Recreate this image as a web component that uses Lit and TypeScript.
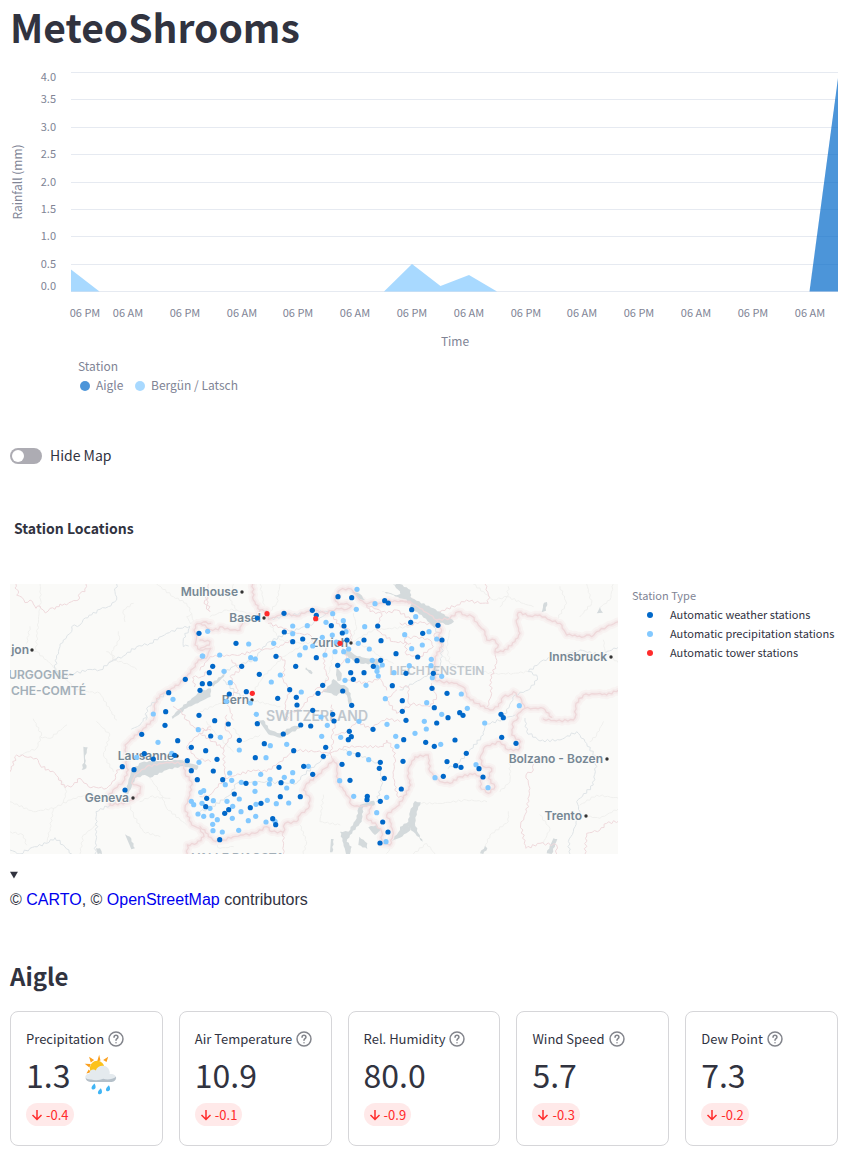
import { LitElement, html, svg, css } from "lit";
import { customElement, property, state } from "lit/decorators.js";

type Kind = "weather" | "precipitation" | "tower";

interface Tile {
  x: number;
  y: number;
  frontier: string[];
  region: string[];
  water: string[];
  river: string[];
  road: string[];
  dots: Record<Kind, string>;
}

/* The map is drawn in six sheets. Each sheet uses three units per map unit. */
const TILES: Tile[] = [
  {
    x: -10,
    y: -4,
    frontier: [
      "632,205 600,210 585,195 590,170 582,150 592,130 610,126 632,130",
      "632,205 618,235 595,240 580,265 560,290 540,310 515,325 480,345 465,370 460,420",
    ],
    region: [
      "48,12 45,24 55,32 50,45 66,52 75,68 90,60 100,72 108,85 120,78 130,90 136,99 150,85 165,88 180,72 200,75 215,65 235,60 240,40 255,35 258,12",
      "630,40 612,70 628,92",
      "630,268 605,290 578,292 584,320",
      "520,380 545,395 560,420",
    ],
    water: ["515,410 540,385 600,335 632,325 632,350 600,365 560,385 530,408 518,417"],
    river: [
      "350,12 345,35 350,60 325,80 300,88 275,105 250,118 240,135 215,140 215,155 190,180 180,200 170,235 165,265 180,290 225,280 270,268 300,270 340,240 370,228 410,200 450,190 500,160 540,145 570,138 565,150 550,175 550,200 565,198",
      "500,340 470,360 440,385 438,420",
    ],
    road: [
      "120,12 122,60 116,110 112,160 108,210",
      "30,215 65,205 110,215 150,250 200,300 230,330",
      "355,155 358,180 335,215 340,240 380,250 410,268",
      "470,12 520,50 560,70 575,100 580,130",
      "375,125 370,90 400,70",
      "80,190 90,140",
      "575,100 560,110 572,132 590,118",
      "320,215 345,230 325,250 350,235",
      "230,330 300,340 330,390 350,420",
    ],
    dots: {
      weather: "597,160 556,298 607,311 600,331 506,338 497,395 597,406",
      precipitation: "607,228 519,358 460,402",
      tower: "",
    },
  },
  {
    x: 190,
    y: -4,
    frontier: [
      "0,130 15,135 30,148 55,150 60,140 90,150 120,150 125,135 150,110 170,112 180,90 200,92 205,118 225,112 250,100 290,108 320,95 345,90 375,100 395,92 410,85 440,88 455,78 440,70 415,75 405,55 420,30 445,25 460,35 480,60 500,72 520,65 530,75 560,62 600,65 632,64",
      "0,205 28,195 30,185 0,180",
      "180,90 160,60 158,12",
    ],
    region: [
      "25,12 20,60 30,95",
      "0,270 30,230 80,225 120,225 170,210 220,205 250,195 270,180",
      "235,230 255,240 250,300 270,330 255,370 262,420",
      "205,130 250,145 290,160 330,165 340,185 380,190",
      "500,75 510,95 545,100 530,150 580,185 632,190",
      "400,110 420,140 450,150 455,180 430,200 440,235 420,255",
      "262,400 300,390 330,350 380,330",
      "380,190 370,250 385,300 345,330",
      "590,330 560,360 590,400 632,375",
      "95,240 120,270 90,290 115,330 80,360 100,420",
      "395,375 400,420",
      "440,300 500,310 540,295 560,330",
      "500,75 560,100 590,90 632,118",
    ],
    water: [
      "438,205 465,225 500,235 545,238 542,250 490,252 460,242 435,225",
      "410,262 425,280 424,300 412,302 408,285",
      "366,335 390,315 400,297 415,310 440,320 452,340 456,375 446,372 440,345 424,337 410,348 385,338",
      "318,262 338,278 335,283 316,268",
      "30,313 75,280 72,290 40,320",
      "0,330 25,330 20,350 0,362",
      "545,35 580,45 600,55 632,60 632,30 600,12 578,12 604,40 590,46 560,36",
      "455,35 480,42 495,60 480,57",
      "520,240 545,262 530,275",
    ],
    river: ["205,118 260,108 330,96 400,95", "70,280 100,260 160,240 200,190 260,160 340,130 380,100", "150,360 110,340 70,300"],
    road: [
      "180,12 190,60 195,110 240,180 300,190 380,185 450,190 520,150 632,140",
      "150,350 190,290 250,230 300,200",
      "400,220 390,270 370,320",
      "0,395 60,370 150,360 240,380",
      "450,190 470,140 460,100",
      "100,12 90,60 110,90 180,110",
      "240,12 230,70 205,100",
      "580,250 540,230 500,200 450,190",
      "30,110 80,90 110,90",
    ],
    dots: {
      weather:
        "414,50 455,53 554,62 565,69 252,100 337,91 349,106 172,114 394,137 432,138 533,138 253,156 427,159 108,190 278,185 308,177 441,180 492,180 543,182 228,229 349,233 471,242 542,241 588,221 38,259 28,278 125,259 287,259 413,256 520,259 452,278 492,278 178,283 460,298 29,311 368,316 577,317 269,329 139,335 88,342 354,340 428,333 289,352 233,355 607,362 291,375 455,376 338,391 607,394 398,403",
      precipitation:
        "471,28 525,71 469,88 398,101 278,138 322,137 378,127 430,122 494,140 278,161 23,154 438,155 397,165 367,172 614,164 146,192 221,190 409,186 475,190 338,198 316,203 446,207 405,215 431,215 508,207 8,228 59,225 299,225 375,225 152,233 166,237 443,242 517,241 547,255 72,274 530,262 531,274 535,288 582,278 241,285 214,306 435,301 91,308 498,316 304,336 556,356 79,364 151,369 169,403 363,411",
      tower: "201,101 347,116 420,190 157,340",
    },
  },
  {
    x: 390,
    y: -4,
    frontier: [
      "0,62 35,68 60,85 90,105 110,120 150,115 175,95 195,105 215,108 235,135 255,155 260,180 285,180 295,195 285,215 310,215 345,185 360,160 350,130 355,97 390,108 420,105 450,120 480,130 500,165 525,165 545,172 560,165 575,170 590,155 620,140 656,125",
      "110,120 125,150 115,170 125,200 105,230 105,300 125,305 170,310 195,325 200,350 230,370 270,390 295,380 310,350 330,345 340,335 365,360 375,385 355,400 350,420",
      "375,385 400,385 430,385 455,412",
      "525,412 528,370 550,345 600,340 620,345 656,330",
    ],
    region: [
      "285,215 290,250 270,300 275,340 262,380",
      "120,95 170,75 200,60 240,70 265,70 265,45 255,12",
      "0,130 30,135 60,125 95,135",
      "15,175 50,170 90,180 100,200 60,230 20,225 15,175",
      "0,320 25,320 25,370 90,380 110,350 95,310",
      "105,160 122,158 118,175 104,172 105,160",
    ],
    water: [
      "0,20 15,30 30,50 50,62 100,85 125,100 150,115 162,125 145,135 120,128 105,142 95,135 65,105 30,85 35,72 10,50 0,40",
      "425,97 432,68 441,66 438,92",
      "590,100 600,82 609,98",
    ],
    river: ["310,412 345,345 385,330 412,300 410,285 385,275 430,240 500,222 540,210 600,225 656,200", "100,140 130,180 120,260 60,300 0,330"],
    road: [
      "220,12 280,60 322,50 370,70 400,80",
      "325,20 322,50 300,80",
      "480,20 500,70 470,120",
      "560,12 575,70 540,110",
      "150,250 280,282 340,280 385,275",
      "640,12 630,60 600,82",
      "130,230 150,250 140,200 150,150",
      "500,222 515,212 530,222",
      "610,180 615,215 656,250",
    ],
    dots: {
      weather: "35,89 32,127 114,136 68,160 126,180 53,231 18,280 100,280 96,325 141,340 103,383 179,398 189,406 144,413 303,403 310,413",
      precipitation: "47,110 87,155 110,177 67,195 35,206 94,238 93,257 28,257 97,293 125,289 184,342 80,368 202,385 125,403 358,377",
      tower: "",
    },
  },
  {
    x: -10,
    y: 131,
    frontier: [
      "460,15 430,40 375,90 380,150 385,165 370,200 345,220 325,245 330,270 385,262 420,235 422,215 395,205 405,180 440,155 500,142 550,145 555,175 575,200 570,240 555,280 575,330 600,340 612,365 590,385 562,390 562,417",
    ],
    region: [
      "30,170 50,120 75,125 110,130 120,150 150,170 165,175 195,218 220,210 240,190 265,215 320,220 345,195 350,165 375,155",
      "632,35 580,70 560,95 590,130 632,140",
      "560,15 585,40 632,45",
    ],
    water: [
      "375,235 385,200 395,165 425,142 480,135 540,135 595,152 590,165 550,153 500,165 450,188 435,180 405,190 395,215 385,238",
      "250,95 263,97 255,130 259,160 245,165 252,135",
      "375,358 390,365 405,400 394,403",
      "288,400 300,400 306,417 293,417",
    ],
    river: [
      "285,417 290,350 288,290 330,270 375,240",
      "30,405 60,417",
      "60,417 90,400 140,385 165,368 190,390 215,417",
      "440,0 420,30 395,42",
    ],
    road: [
      "100,12 125,60 110,100 60,120",
      "120,65 150,70 200,30",
      "30,260 100,290 160,280 220,250 280,235",
      "160,280 150,340 140,385",
      "385,260 400,300 430,350 480,365",
      "240,417 250,360 290,330",
      "180,190 200,230 190,260",
      "450,190 480,230 500,280 560,330",
      "30,350 70,360 80,390",
      "290,20 330,60 310,120 340,170",
      "420,260 450,245 510,250",
    ],
    dots: {
      weather: "495,31 425,58 533,77 574,97 617,107 433,116 524,121 460,132 562,137 367,155 402,164 574,167 592,194 375,225 620,250 617,275",
      precipitation: "595,44 474,82 410,127 515,115 597,142 611,227 602,232 574,259 581,269 606,265 594,297 611,304",
      tower: "",
    },
  },
  {
    x: 190,
    y: 131,
    frontier: [
      "0,335 15,345 25,365 40,377 70,375 100,365 130,360 165,355 200,335 215,350 250,352 255,325 290,320 300,300 325,280 330,250 310,225 320,205 350,185 375,160 400,135 410,145 412,200 430,225 445,245 455,270 480,275 515,270 500,310 530,330 545,350 545,385 570,390 580,355 570,320 560,300 590,275 610,250 632,210",
    ],
    region: [
      "250,352 250,417",
      "80,0 75,40 95,60 70,100 75,190 160,165 200,170 240,140 285,105 350,110 390,115 400,85 395,60 405,30 400,0",
      "75,190 30,240 0,245",
      "390,115 440,95 550,95 560,75 580,100 585,130 580,180 590,240 610,250",
      "405,60 440,50 470,20 510,40 560,10 600,20",
      "0,55 40,80 70,100",
      "390,115 400,135",
    ],
    water: [
      "175,15 190,15 210,45 240,55 275,35 300,30 300,40 270,55 240,68 205,58",
      "480,270 522,257 524,270 490,275 485,320 450,360 440,380 455,395 450,417 438,417 430,385 420,350 445,350 470,310 475,280",
      "505,337 530,330 542,345 525,360 515,350",
      "632,330 600,345 575,378 600,368 632,345",
      "393,372 401,372 397,412 390,412",
      "478,365 502,385 502,402 475,390",
    ],
    river: ["0,290 30,280 90,240 110,205 160,200 290,205 310,180 385,120", "430,105 480,120 540,150 545,210 530,260"],
    road: [
      "370,240 360,320 420,330",
      "100,40 130,80 180,60",
      "40,380 60,400 100,395",
      "570,400 560,415",
      "300,330 320,380 310,417",
      "20,20 50,60 100,110",
    ],
    dots: {
      weather:
        "44,17 85,27 172,26 302,30 332,33 402,18 250,57 32,63 448,49 454,65 445,74 519,43 611,74 118,76 193,86 377,97 281,107 474,119 370,124 166,128 51,133 541,142 609,139 426,148 237,157 311,154 538,160 40,168 338,178 553,190 68,194 450,196 138,205 243,203 604,222 103,237 241,245 301,245 502,244 501,254 183,265 541,259 151,278 86,284 74,295 218,311 227,329 548,321 564,351 59,374 540,384",
      precipitation:
        "382,31 477,19 561,28 61,67 365,64 422,67 587,64 260,88 211,92 591,94 118,105 448,115 198,128 506,134 325,154 89,174 182,178 278,173 253,187 95,196 210,193 277,199 124,202 165,205 208,207 76,209 419,197 165,229 260,219 461,244 560,247 118,252 40,257 81,259 202,256 168,268 229,266 266,264 98,274 30,280 123,290 36,302 97,310 167,304 52,314 145,317 198,321 225,319 38,328 530,293 39,347 67,351 116,346 558,380",
      tower: "",
    },
  },
  {
    x: 390,
    y: 131,
    frontier: [
      "32,210 25,190 25,160 45,125 85,120 90,170 120,200 150,205 180,185 225,175 245,190 240,215 265,235 285,215 265,190 275,160 250,155 240,130 255,95 300,80 325,105 355,105 362,80 335,60 340,20 350,15",
      "430,12 470,18 520,15 526,8",
    ],
    region: [
      "400,148 400,165 378,180 390,220 380,290 362,330 378,400 420,385 470,390 470,417",
      "555,417 560,355 600,345 620,325 656,318",
    ],
    water: [
      "0,335 25,320 30,290 45,258 62,262 50,290 45,325 55,355 68,380 40,350 25,335 0,348",
      "440,415 460,370 472,372 455,417",
      "240,415 255,393 262,400 250,417",
    ],
    river: [
      "375,10 380,50 420,78 480,75 530,50 555,80 590,130 580,210 530,260 540,290 520,350 505,380 510,417",
      "145,160 180,140 250,60 255,30 345,0",
    ],
    road: [
      "65,265 120,265 200,255 260,260",
      "300,230 330,200 330,130",
      "325,290 325,320 270,360 255,395",
      "40,417 80,385 105,417",
      "540,270 590,240 656,250",
      "540,300 600,310 656,280",
      "610,20 590,60 570,80",
      "420,300 450,340 430,385",
    ],
    dots: {
      weather: "18,16 110,24 165,75 77,82 103,94 199,115 141,140 167,152 183,157 237,161 130,184 249,186 305,67 348,85",
      precipitation: "73,19 79,42 45,55 122,88 254,24 228,149 105,188 264,218",
      tower: "",
    },
  },
];

const parse = (list: string): number[][] =>
  list
    .split(" ")
    .filter(Boolean)
    .map((pair) => pair.split(",").map(Number));

/* Adds small bends to a line, the same ones at every render. */
function winding(list: string, strength: number): string {
  const points = parse(list);
  let out = `M${points[0].join(" ")}`;
  for (let i = 1; i < points.length; i++) {
    const [ax, ay] = points[i - 1];
    const [bx, by] = points[i];
    const length = Math.hypot(bx - ax, by - ay) || 1;
    const steps = Math.max(1, Math.round(length / 8));
    for (let s = 1; s <= steps; s++) {
      const t = s / steps;
      const shift = s === steps ? 0 : Math.sin(ax * 12.9 + by * 7.3 + s * 78.2) * strength;
      const x = ax + (bx - ax) * t - ((by - ay) / length) * shift;
      const y = ay + (by - ay) * t + ((bx - ax) / length) * shift;
      out += `L${x.toFixed(1)} ${y.toFixed(1)}`;
    }
  }
  return out;
}

const CITIES = [
  { name: "Mulhouse", x: 228, y: 12, dot: 232 },
  { name: "Basel", x: 251, y: 38, dot: 254 },
  { name: "Zurich", x: 338, y: 63, dot: 341 },
  { name: "Bern", x: 239, y: 120, dot: 242 },
  { name: "Lausanne", x: 164, y: 176, dot: 167 },
  { name: "Geneva", x: 119, y: 218, dot: 123 },
  { name: "jon", x: 19, y: 70, dot: 22 },
  { name: "Innsbruck", x: 597, y: 77, dot: 601 },
  { name: "Bolzano - Bozen", x: 593, y: 179, dot: 597 },
  { name: "Trento", x: 572, y: 236, dot: 576 },
];

@customElement("rain-chart")
class RainChart extends LitElement {
  static styles = css`
    :host {
      display: block;
    }
    .plot {
      display: block;
      width: 100%;
      height: auto;
      font-family: "Noto Sans CJK SC", sans-serif;
      fill: #808495;
    }
    .tick {
      font-size: 11px;
    }
    .title {
      font-size: 12px;
    }
    .grid {
      stroke: #e6eaf1;
    }
    .aigle {
      fill: #0068c9;
      opacity: 0.7;
    }
    .latsch {
      fill: #83c9ff;
      opacity: 0.7;
    }
  `;

  render() {
    const levels = [4, 3.5, 3, 2.5, 2, 1.5, 1, 0.5, 0];
    const level = (mm: number) => Math.round(231 - mm * 54.75) + 0.5;
    const hours = [75, 118, 175, 232, 288, 345, 402, 459, 516, 572, 629, 686, 743, 800];
    return html`
      <svg class="plot" viewBox="0 0 828 340" role="img" aria-label="Rainfall by station">
        ${levels.map(
          (mm) => svg`<line class="grid" x1="61" x2="828" y1=${level(mm)} y2=${level(mm)}></line>
            <text class="tick" text-anchor="end" x="46" y=${Math.floor(level(mm)) + (mm === 4 ? 9 : mm === 0 ? -1 : 4)}>${mm.toFixed(1)}</text>`,
        )}
        <path class="latsch" d="M61 209.5L89.500 231.500H61ZM374 231.500L402 204L430.500 226L459 215L487 231.500Z"></path>
        <path class="aigle" d="M799.500 231.500L828 18V231.500Z"></path>
        ${hours.map(
          (x, i) => svg`<text class="tick" text-anchor="middle" x=${x} y="257">${i % 2 ? "06 AM" : "06 PM"}</text>`,
        )}
        <text class="title" text-anchor="middle" x="445" y="286">Time</text>
        <text class="title" text-anchor="middle" transform="translate(12 122) rotate(-90)">Rainfall (mm)</text>
        <text class="title" x="68" y="311">Station</text>
        <circle class="aigle" cx="75" cy="326" r="5"></circle>
        <text class="title" x="86" y="330">Aigle</text>
        <circle class="latsch" cx="130" cy="326" r="5"></circle>
        <text class="title" x="141" y="330">Bergün / Latsch</text>
      </svg>
    `;
  }
}

@customElement("station-map")
class StationMap extends LitElement {
  static styles = css`
    :host {
      display: block;
    }
    .map {
      display: block;
      width: 100%;
      height: auto;
      background: #fafaf8;
      font-family: Inter, sans-serif;
      font-weight: 600;
    }
    .lines {
      fill: none;
      stroke-linejoin: round;
      stroke-linecap: round;
    }
    .halo-wide {
      stroke: #f8f3f2;
      stroke-width: 26;
    }
    .halo {
      stroke: #f5ebeb;
      stroke-width: 14;
    }
    .frontier {
      stroke: #eed7d9;
      stroke-width: 4;
    }
    .region {
      stroke: #efd9dc;
      stroke-width: 3;
    }
    .river {
      stroke: #dfe4e7;
      stroke-width: 3;
    }
    .road {
      stroke: #f0f0ee;
      stroke-width: 3;
    }
    .water {
      fill: #d4dadc;
    }
    .city {
      font-size: 12px;
      fill: #768794;
      stroke: #fafaf8;
      stroke-width: 2;
      paint-order: stroke;
    }
    .land {
      font-size: 12px;
      fill: #a3afb8;
    }
    .country {
      font-size: 14px;
      fill: #c0c7cd;
    }
    .small {
      font-size: 12px;
      fill: #c0c7cd;
    }
    .spot {
      fill: #333;
    }
    .weather {
      fill: #0068c9;
    }
    .precipitation {
      fill: #83c9ff;
    }
    .tower {
      fill: #ff2b2b;
    }
  `;

  private layer(name: keyof Tile, cls: string, strength: number) {
    return TILES.map(
      (t) => svg`<g class="lines" transform="translate(${t.x} ${t.y}) scale(0.33333)">
        ${(t[name] as string[]).map((list) => svg`<path class=${cls} d=${winding(list, strength)}></path>`)}
      </g>`,
    );
  }

  private dots(kind: Kind) {
    return TILES.map((t) =>
      parse(t.dots[kind]).map(
        ([x, y]) => svg`<circle class=${kind} cx=${(t.x + x / 3).toFixed(1)} cy=${(t.y + y / 3).toFixed(1)} r="2.6"></circle>`,
      ),
    );
  }

  render() {
    return html`
      <svg class="map" viewBox="0 0 608 270" role="img" aria-label="Map of the station locations">
        ${this.layer("road", "road", 3)} ${this.layer("frontier", "halo-wide", 2)}
        ${this.layer("frontier", "halo", 2)} ${this.layer("river", "river", 4)}
        ${this.layer("water", "water", 2)} ${this.layer("region", "region", 4)}
        ${this.layer("frontier", "frontier", 3)}
        <text class="land" text-anchor="end" x="64" y="95">URGOGNE-</text>
        <text class="land" text-anchor="end" x="76" y="111">CHE-COMTÉ</text>
        <text class="country" text-anchor="middle" x="307" y="137">SWITZERLAND</text>
        <text class="small" text-anchor="middle" x="427" y="91">LIECHTENSTEIN</text>
        <text class="land" text-anchor="middle" x="228" y="278">VALLE D'AOSTA</text>
        ${CITIES.map(
          (c) => svg`<text class="city" text-anchor="end" x=${c.x} y=${c.y}>${c.name}</text>
            <circle class="spot" cx=${c.dot} cy=${c.y - 4} r="1.700"></circle>`,
        )}
        ${this.dots("precipitation")} ${this.dots("weather")} ${this.dots("tower")}
      </svg>
    `;
  }
}

@customElement("metric-card")
class MetricCard extends LitElement {
  @property() name = "";
  @property() value = "";
  @property() delta = "";
  @property({ type: Boolean }) showers = false;

  static styles = css`
    :host {
      display: block;
      box-sizing: border-box;
      border: 1px solid #d6d6d9;
      border-radius: 8px;
      padding: 15px 15px 19px;
      color: #31333f;
    }
    .head {
      display: flex;
      align-items: center;
      gap: 3px;
      height: 24px;
      font-size: 13px;
      line-height: 24px;
      white-space: nowrap;
    }
    .help {
      display: flex;
      padding: 0;
      border: 0;
      background: none;
      color: #83858c;
      cursor: help;
    }
    .value {
      display: flex;
      align-items: center;
      gap: 13px;
      height: 46px;
      font-size: 32px;
      line-height: 46px;
    }
    .delta {
      display: inline-flex;
      align-items: center;
      gap: 3px;
      height: 23px;
      margin-top: 6px;
      padding: 0 5px;
      border-radius: 12px;
      background: #ffe9e9;
      color: #ff2b2b;
      font-size: 13px;
      line-height: 22px;
    }
    svg {
      display: block;
      flex: none;
    }
  `;

  render() {
    return html`
      <div class="head">
        <span>${this.name}</span>
        <button class="help" type="button" aria-label="About ${this.name}">
          <svg width="18" height="18" viewBox="0 0 24 24" fill="none" stroke="currentColor" stroke-width="2" stroke-linecap="round">
            <circle cx="12" cy="12" r="9.300"></circle>
            <path d="M9.400 9.700a2.600 2.600 0 0 1 5.200 0c0 1.800-2.600 2-2.600 4"></path>
            <path d="M12 17v.1"></path>
          </svg>
        </button>
      </div>
      <div class="value">
        <span>${this.value}</span>
        ${this.showers
          ? html`<svg width="35" height="43" viewBox="250 160 104 128" role="img" aria-label="Sun behind a rain cloud">
              <path
                fill="#fba01f"
                d="M298 165l4 17-10 3zM325 171l-5 16-10-6zM268 171l15 10-10 7zM255 192l18 1-4 10zM260 221l7-12 7 8z"
              ></path>
              <circle cx="292" cy="205" r="22" fill="#fcc21b"></circle>
              <path
                fill="#e4eaee"
                d="M272 244c-20 0-20-22-3-23 0-10 12-15 19-9 5-20 38-19 41 3 1 3 0 6 0 8 24-2 26 21 8 21z"
              ></path>
              <path fill="#b5c0c9" d="M258 234c2 3 9 6 16 5 15 4 28 1 36-2 12 4 28 2 38-6 1 8-4 15-13 15h-63c-8 0-14-4-14-12z"></path>
              <path
                fill="#40b5f5"
                d="M284 251c5 8 5 17-3 18-8 0-8-9 3-18zM303 265c5 8 5 17-3 18-8 0-8-9 3-18zM327 256c5 8 5 17-3 18-8 0-8-9 3-18z"
              ></path>
            </svg>`
          : ""}
      </div>
      <div class="delta">
        <svg width="12" height="12" viewBox="0 0 12 12" fill="none" stroke="currentColor" stroke-width="1.500">
          <path d="M6 1v9.500M1.500 6L6 10.500 10.500 6"></path>
        </svg>
        <span>${this.delta}</span>
      </div>
    `;
  }
}

@customElement("app-root")
class AppRoot extends LitElement {
  @state() private hidden_ = false;

  static styles = css`
    :host {
      display: block;
      padding: 0 12px 10px 10px;
      background: #fff;
      color: #31333f;
      font-family: "Noto Sans CJK SC", sans-serif;
    }
    h1,
    h2,
    h3 {
      margin: 0;
    }
    h1 {
      font-size: 39px;
      font-weight: 700;
      line-height: 52px;
      padding-bottom: 8px;
    }
    .toggle {
      display: flex;
      align-items: center;
      gap: 8px;
      margin-top: 44px;
      font-size: 14px;
      line-height: 24px;
    }
    .toggle span {
      line-height: 22px;
      padding-bottom: 2px;
    }
    .switch {
      appearance: none;
      display: flex;
      align-items: center;
      width: 32px;
      height: 16px;
      margin: 0;
      padding: 0 2px;
      border-radius: 8px;
      background: #adacb3;
    }
    .switch::before {
      content: "";
      width: 12px;
      height: 12px;
      border-radius: 50%;
      background: #fff;
    }
    .switch:checked {
      justify-content: flex-end;
      background: #ff4b4b;
    }
    h3 {
      margin-top: 48px;
      padding-left: 4px;
      font-size: 14px;
      line-height: 24px;
    }
    .figure {
      display: flex;
      align-items: flex-start;
      gap: 14px;
      margin-top: 44px;
    }
    .figure station-map {
      flex: 1;
      min-width: 0;
    }
    .legend {
      flex: none;
      width: 206px;
      margin-top: 2px;
      font-size: 11px;
      line-height: 19px;
    }
    .legend-title {
      color: #808495;
    }
    .legend ul {
      margin: 0;
      padding: 0;
      list-style: none;
    }
    .legend li {
      display: flex;
      align-items: center;
      gap: 17px;
      padding-left: 15px;
      white-space: nowrap;
    }
    .key {
      width: 6px;
      height: 6px;
      border-radius: 50%;
    }
    .weather {
      background: #0068c9;
    }
    .precipitation {
      background: #83c9ff;
    }
    .tower {
      background: #ff2b2b;
    }
    details {
      margin-top: 12px;
      font-family: "Liberation Sans", Arial, sans-serif;
      font-size: 16px;
      line-height: 25px;
    }
    summary {
      height: 21px;
      font-size: 12px;
      line-height: 18px;
    }
    a {
      color: #0000ee;
      text-decoration: none;
    }
    h2 {
      margin-top: 44px;
      font-size: 24px;
      font-weight: 700;
      line-height: 40px;
    }
    .cards {
      display: grid;
      grid-template-columns: repeat(5, minmax(0, 1fr));
      gap: 16px;
      margin-top: 15px;
    }
  `;

  private onToggle(event: Event) {
    this.hidden_ = (event.target as HTMLInputElement).checked;
  }

  render() {
    return html`
      <main>
        <h1>MeteoShrooms</h1>
        <rain-chart></rain-chart>
        <label class="toggle">
          <input class="switch" type="checkbox" role="switch" .checked=${this.hidden_} @change=${this.onToggle} />
          <span>Hide Map</span>
        </label>
        ${this.hidden_
          ? ""
          : html`
              <h3>Station Locations</h3>
              <div class="figure">
                <station-map></station-map>
                <div class="legend">
                  <div class="legend-title">Station Type</div>
                  <ul>
                    <li><span class="key weather"></span>Automatic weather stations</li>
                    <li><span class="key precipitation"></span>Automatic precipitation stations</li>
                    <li><span class="key tower"></span>Automatic tower stations</li>
                  </ul>
                </div>
              </div>
              <details open>
                <summary aria-label="Map credits"></summary>
                © <a href="#carto">CARTO</a>, © <a href="#osm">OpenStreetMap</a> contributors
              </details>
            `}
        <h2>Aigle</h2>
        <section class="cards">
          <metric-card name="Precipitation" value="1.3" delta="-0.4" showers></metric-card>
          <metric-card name="Air Temperature" value="10.9" delta="-0.1"></metric-card>
          <metric-card name="Rel. Humidity" value="80.0" delta="-0.9"></metric-card>
          <metric-card name="Wind Speed" value="5.7" delta="-0.3"></metric-card>
          <metric-card name="Dew Point" value="7.3" delta="-0.2"></metric-card>
        </section>
      </main>
    `;
  }
}
